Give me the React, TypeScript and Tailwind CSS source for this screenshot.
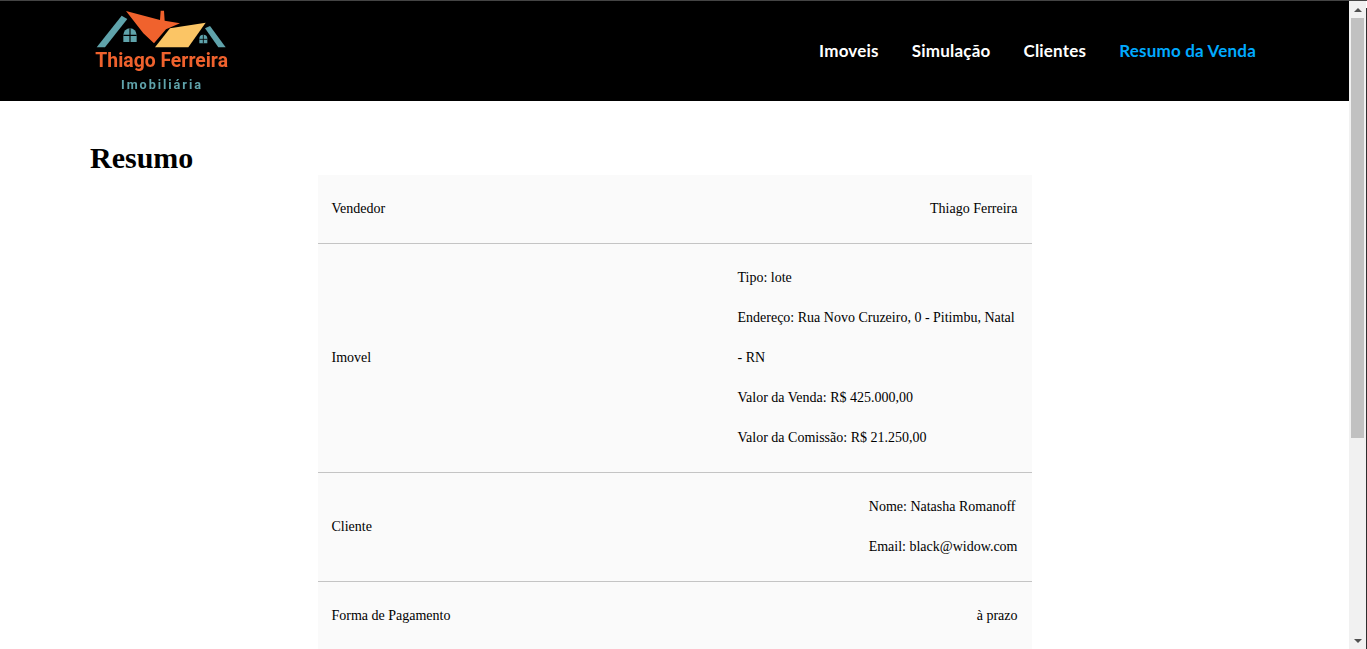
export default function App() {
  const td = "px-[14px] py-[14px] align-middle";
  return (
    <div className="h-[649px] w-[1367px] overflow-hidden flex flex-col border-t border-[#444] bg-white text-black font-['Liberation_Serif',serif]">
      <div className="flex flex-1 min-h-0">
        <main className="w-[1349px] shrink-0 overflow-hidden">
          <header className="h-[100px] bg-black flex items-center justify-between pl-[80px] pr-[93px]">
            <svg width="170" height="100" viewBox="0 3 510 300" className="blur-[0.4px] shrink-0">
              <polygon points="50,142 125,47 142,57 75,142" fill="#5fa3ab" />
              <polygon points="138,33 240,60 242,32 252,32 254,62 300,70 258,88 222,130 190,100" fill="#f0622d" />
              <polygon points="225,142 270,85 377,68 325,142" fill="#fbc565" />
              <polygon points="375,85 390,78 437,142 415,142" fill="#5fa3ab" />
              <path d="M130 126V105a20 20 0 0 1 40 0V126Z" fill="#5fa3ab" />
              <path d="M150 85V126M130 106H170" stroke="#000" strokeWidth="3.5" fill="none" />
              <path d="M358 130V116a12 12 0 0 1 24 0V130Z" fill="#5fa3ab" />
              <path d="M370 104V130M358 118H382" stroke="#000" strokeWidth="2.5" fill="none" />
              <text x="46" y="201" textLength="398" lengthAdjust="spacingAndGlyphs" fontFamily="Roboto, sans-serif" fontWeight="700" fontSize="62" fill="#f0622d">Thiago Ferreira</text>
              <text x="123" y="266" textLength="240" lengthAdjust="spacing" fontFamily="Roboto, sans-serif" fontWeight="700" fontSize="38" fill="#5fa3ab">Imobiliária</text>
            </svg>
            <nav className="flex items-center gap-[33px] font-['Lato',sans-serif] font-bold text-[17px] tracking-[0.2px] text-white">
              <a>Imoveis</a>
              <a>Simulação</a>
              <a>Clientes</a>
              <a className="text-[#00aaff]">Resumo da Venda</a>
            </nav>
          </header>
          <section>
            <h1 className="pl-[90px] pt-[39px] text-[30px] leading-[35px] font-bold">Resumo</h1>
            <table className="mx-auto w-[714px] table-fixed bg-[#fafafa] text-[14px] leading-[40px] border-collapse">
              <colgroup>
                <col className="w-[406px]" />
                <col />
              </colgroup>
              <tbody>
                <tr className="border-b border-[#c4c4c4]">
                  <td className={td}>Vendedor</td>
                  <td className={`${td} text-right`}>Thiago Ferreira</td>
                </tr>
                <tr className="border-b border-[#c4c4c4]">
                  <td className={td}>Imovel</td>
                  <td className={td}>
                    <p>Tipo: lote</p>
                    <p>Endereço: Rua Novo Cruzeiro, 0 - Pitimbu, Natal - RN</p>
                    <p>Valor da Venda: R$ 425.000,00</p>
                    <p>Valor da Comissão: R$ 21.250,00</p>
                  </td>
                </tr>
                <tr className="border-b border-[#c4c4c4]">
                  <td className={td}>Cliente</td>
                  <td className={`${td} text-right`}>
                    <p className="pr-[2px]">Nome: Natasha Romanoff</p>
                    <p>Email: black@widow.com</p>
                  </td>
                </tr>
                <tr>
                  <td className={td}>Forma de Pagamento</td>
                  <td className={`${td} text-right`}>à prazo</td>
                </tr>
              </tbody>
            </table>
          </section>
        </main>
        <aside className="w-[17px] shrink-0 bg-[#f1f1f1] flex flex-col items-center">
          <div className="h-[17px] w-full flex items-center justify-center shrink-0">
            <div className="w-0 h-0 border-x-[4px] border-x-transparent border-b-[4px] border-b-[#505050]" />
          </div>
          <div className="h-[420px] w-[13px] bg-[#c1c1c1] shrink-0" />
          <div className="flex-1" />
          <div className="h-[17px] w-full flex items-center justify-center shrink-0">
            <div className="w-0 h-0 border-x-[4px] border-x-transparent border-t-[4px] border-t-[#505050]" />
          </div>
        </aside>
        <div className="w-px mt-[7px] bg-[#2e2e2e]" />
      </div>
    </div>
  );
}
